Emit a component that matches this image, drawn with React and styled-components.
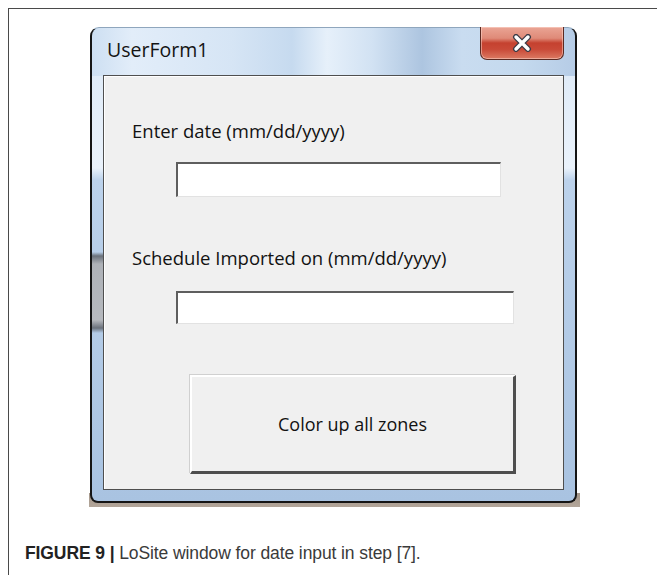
import * as React from "react";
import styled, { createGlobalStyle } from "styled-components";

const GlobalStyle = createGlobalStyle`
  html, body {
    margin: 0;
    padding: 0;
    background: #ffffff;
    overflow: hidden;
  }
`;

const Figure = styled.div`
  margin: 8px 0 0 8px;
  height: 567px;
  box-sizing: border-box;
  border-top: 1px solid #4a4a4a;
  border-left: 1px solid #4a4a4a;
  display: flex;
  flex-direction: column;
  overflow: hidden;
`;

const Stage = styled.div`
  padding: 18px 0 0 81px;
`;

// tan backdrop that shows behind the rounded lower corners
const Backdrop = styled.div`
  width: 489px;
  margin-left: -1px;
  padding: 0 1px 4px 1px;
  background: linear-gradient(
    to bottom,
    transparent calc(100% - 14px),
    #a49689 calc(100% - 14px),
    #b3a69a 100%
  );
`;

const Window = styled.div`
  width: 487px;
  height: 476px;
  box-sizing: border-box;
  border: 2px solid #151515;
  border-top: 1px solid #8fa6bd;
  border-radius: 9px 9px 8px 8px;
  padding: 0 11px 11px 11px;
  display: flex;
  flex-direction: column;
  background:
    linear-gradient(
        to bottom,
        transparent 224px,
        #6a717b 228px,
        #aeb2b8 236px,
        #b6b9be 292px,
        #6a717b 300px,
        transparent 305px
      )
      left top / 11px 100% no-repeat,
    linear-gradient(
        90deg,
        #cddff2 0,
        #e2edf9 40px,
        #d6e5f5 140px,
        #c6daef 200px,
        #e6f0fa 235px,
        #d2e2f3 280px,
        #adc5e0 330px,
        #c9dcf0 370px,
        #c4d9ee 430px,
        #b6cce6 100%
      )
      left top / 100% 48px no-repeat,
    linear-gradient(to bottom, #dbe8f6 0, #eaf2fb 140px, #bcd2eb 152px, #a9c3e1 100%);
`;

const TitleBar = styled.div`
  height: 47px;
  display: flex;
  justify-content: space-between;
  align-items: flex-start;
`;

const Title = styled.div`
  font-family: "Open Sans", "Noto Sans", sans-serif;
  font-size: 19.5px;
  line-height: 24px;
  color: #141414;
  margin: 10px 0 0 4px;
`;

const CloseButton = styled.div`
  width: 84px;
  height: 33px;
  box-sizing: border-box;
  margin-top: -1px;
  border: 1px solid #5b2a22;
  border-top: none;
  border-radius: 0 0 7px 7px;
  background: linear-gradient(
    to bottom,
    #eaa595 0,
    #df8a78 35%,
    #c5412f 50%,
    #c94a38 70%,
    #dc7a63 100%
  );
  box-shadow: inset 0 0 0 1px rgba(255, 220, 210, 0.5);
  display: flex;
  align-items: center;
  justify-content: center;
`;

const Client = styled.div`
  flex: 1;
  background: #f0f0f0;
  border: 1px solid #4f4f4f;
  box-shadow: inset 1px 1px 0 #ffffff;
  display: flex;
  flex-direction: column;
  padding: 0 0 0 28px;
`;

const Label = styled.div`
  font-family: "Open Sans", "Noto Sans", sans-serif;
  font-size: 18.5px;
  line-height: 24px;
  color: #121212;
  margin-top: ${(p) => p.gap}px;
`;

const TextBox = styled.div`
  box-sizing: border-box;
  width: ${(p) => p.w}px;
  height: ${(p) => p.h}px;
  margin: ${(p) => p.gap}px 0 0 44px;
  background: #ffffff;
  border-style: solid;
  border-width: 2px 1px 1px 2px;
  border-color: #5e5e5e #e2e2e2 #e2e2e2 #5e5e5e;
`;

const PushButton = styled.div`
  box-sizing: border-box;
  width: 326px;
  height: 99px;
  margin: 51px 0 0 58px;
  background: #f0f0f0;
  border-style: solid;
  border-width: 2px 3px 3px 2px;
  border-color: #ffffff #4e4e4e #4e4e4e #ffffff;
  box-shadow: -1px -1px 0 #d0d0d0;
  display: flex;
  align-items: center;
  justify-content: center;
  font-family: "Open Sans", "Noto Sans", sans-serif;
  font-size: 18px;
  color: #121212;
`;

const Caption = styled.div`
  margin: 36px 0 0 16px;
  font-family: "Liberation Sans", Arial, sans-serif;
  font-size: 17.5px;
  line-height: 20px;
  color: #3a3a3a;
  letter-spacing: -0.1px;

  b {
    color: #222222;
    font-weight: 700;
  }
`;

const CloseGlyph = () => (
  <svg width="22" height="18" viewBox="0 0 22 18">
    <path
      d="M5 3 L17 15 M17 3 L5 15"
      stroke="#3b3b46"
      strokeWidth="6"
      strokeLinecap="round"
      fill="none"
    />
    <path
      d="M5 3 L17 15 M17 3 L5 15"
      stroke="#ffffff"
      strokeWidth="3.4"
      strokeLinecap="round"
      fill="none"
    />
  </svg>
);

export default function App() {
  return (
    <>
      <GlobalStyle />
      <Figure>
        <Stage>
          <Backdrop>
            <Window>
              <TitleBar>
                <Title>UserForm1</Title>
                <CloseButton>
                  <CloseGlyph />
                </CloseButton>
              </TitleBar>
              <Client>
                <Label gap={43}>Enter date (mm/dd/yyyy)</Label>
                <TextBox w={325} h={35} gap={19} />
                <Label gap={49}>Schedule Imported on (mm/dd/yyyy)</Label>
                <TextBox w={338} h={33} gap={21} />
                <PushButton>Color up all zones</PushButton>
              </Client>
            </Window>
          </Backdrop>
        </Stage>
        <Caption>
          <b>FIGURE 9 |</b> LoSite window for date input in step [7].
        </Caption>
      </Figure>
    </>
  );
}
